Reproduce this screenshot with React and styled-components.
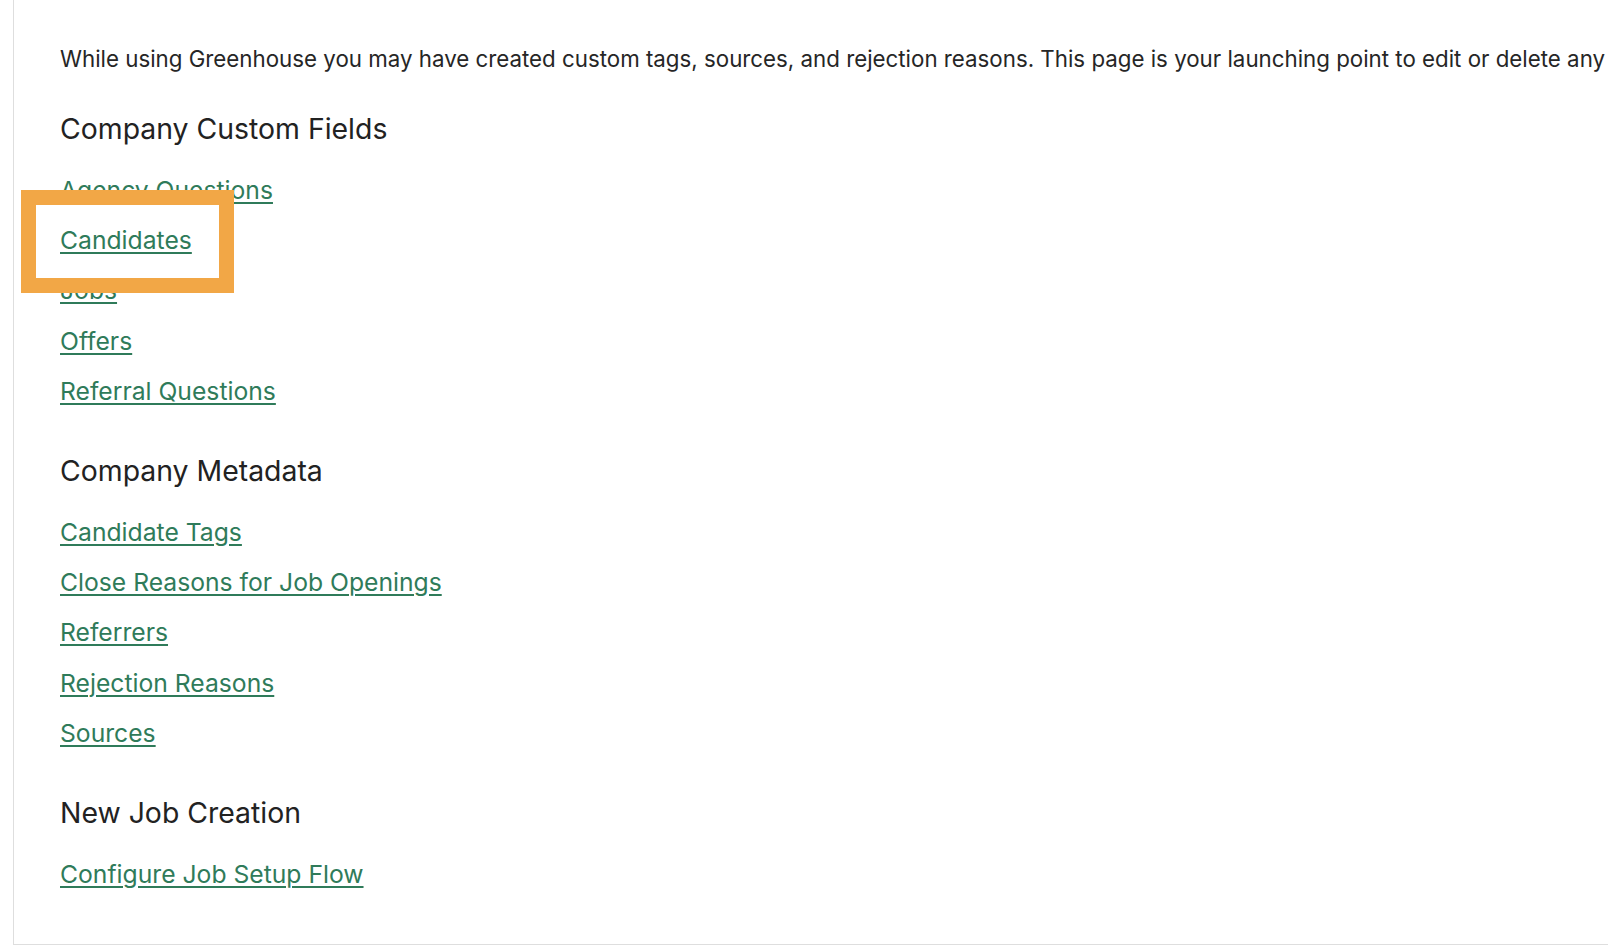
import styled, { createGlobalStyle } from 'styled-components'

const Global = createGlobalStyle`
  html, body {
    margin: 0;
    padding: 0;
    background: #fff;
  }
  body {
    font-family: Inter, "Noto Sans", sans-serif;
    color: #222;
    overflow: hidden;
  }
`

const Panel = styled.div`
  margin-left: 13px;
  width: 1700px;
  border-left: 1px solid #dedede;
  border-bottom: 1px solid #dedede;
  padding: 44px 0 45px 46px;
`

const Intro = styled.p`
  margin: 0;
  font-size: 22.3px;
  line-height: 30px;
  white-space: nowrap;
  color: #262626;
`

const Section = styled.section`
  margin-top: 36.5px;
`

const Heading = styled.h2`
  margin: 0 0 18.5px;
  font-size: 28.4px;
  line-height: 36px;
  font-weight: 400;
  color: #222;
`

const LinkList = styled.ul`
  list-style: none;
  margin: 0;
  padding: 0;
`

const Item = styled.li`
  position: relative;
  font-size: 24.7px;
  line-height: 50.2px;
`

const Link = styled.a`
  color: #2f7b5a;
  text-decoration: underline;
  text-decoration-thickness: 2px;
  text-underline-offset: 3px;
`

const Highlight = styled.span`
  position: absolute;
  left: -39px;
  top: -25px;
  width: 213px;
  height: 103px;
  box-sizing: border-box;
  border: 15px solid #f2a746;
  pointer-events: none;
  z-index: 2;
`

const sections = [
  {
    title: 'Company Custom Fields',
    links: ['Agency Questions', 'Candidates', 'Jobs', 'Offers', 'Referral Questions'],
  },
  {
    title: 'Company Metadata',
    links: ['Candidate Tags', 'Close Reasons for Job Openings', 'Referrers', 'Rejection Reasons', 'Sources'],
  },
  {
    title: 'New Job Creation',
    links: ['Configure Job Setup Flow'],
  },
]

export default function App() {
  return (
    <>
      <Global />
      <Panel>
        <Intro>
          While using Greenhouse you may have created custom tags, sources, and rejection reasons. This page is your launching point to edit or delete any of them.
        </Intro>
        {sections.map(s => (
          <Section key={s.title}>
            <Heading>{s.title}</Heading>
            <LinkList>
              {s.links.map(l => (
                <Item key={l}>
                  <Link href="#">{l}</Link>
                  {l === 'Candidates' && <Highlight />}
                </Item>
              ))}
            </LinkList>
          </Section>
        ))}
      </Panel>
    </>
  )
}
